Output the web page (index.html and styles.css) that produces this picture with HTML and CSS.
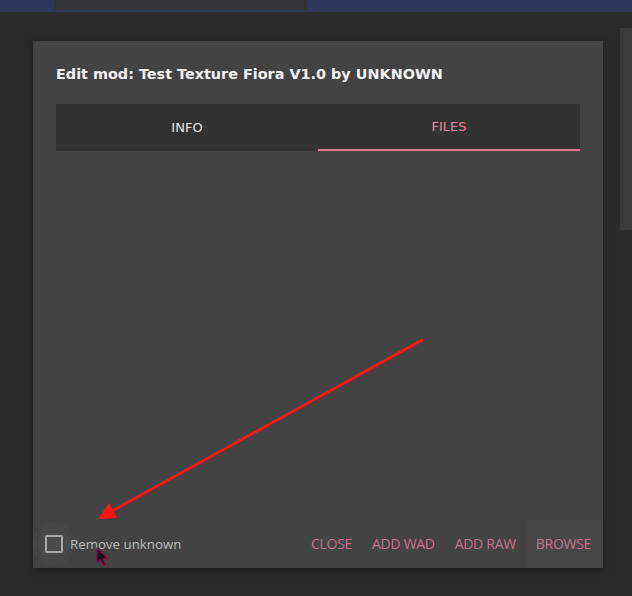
FILE: index.html
```html
<!DOCTYPE html>
<html>
<head>
<meta charset="utf-8">
<link rel="stylesheet" href="styles.css">
</head>
<body>
<div class="topbar"><div class="topblock"></div></div>
<div class="stage">
  <div class="modal">
    <h1 class="title">Edit mod: Test Texture Fiora V1.0 by UNKNOWN</h1>
    <div class="tabs">
      <div class="tab">INFO</div>
      <div class="tab active">FILES</div>
    </div>
    <div class="content"></div>
    <div class="footer">
      <label class="check">
        <span class="ripple"><span class="box"></span></span>
        <span class="check-label">Remove unknown</span>
      </label>
      <div class="actions">
        <span class="btn">CLOSE</span>
        <span class="btn">ADD WAD</span>
        <span class="btn">ADD RAW</span>
        <span class="btn hover">BROWSE</span>
      </div>
    </div>
  </div>
  <div class="sidepanel"></div>
</div>
<svg class="annot" width="632" height="596" viewBox="0 0 632 596">
  <line x1="422" y1="340" x2="112" y2="511" stroke="#ff1414" stroke-width="2.6" stroke-linecap="round"/>
  <polygon points="98,519 109,503 117,518" fill="#ff1414"/>
</svg>
<svg class="cursor" width="16" height="22" viewBox="0 0 16 22">
  <path d="M1 1 L1 16 L4.5 12.5 L7.5 19 L10 18 L7 11.5 L12 11.5 Z" fill="#1a0a12" stroke="#7a1040" stroke-width="1.4" stroke-linejoin="round"/>
</svg>
</body>
</html>
```

FILE: styles.css
```css
html, body {
  margin: 0;
  padding: 0;
}
body {
  width: 632px;
  height: 596px;
  overflow: hidden;
  background: #2a2a2a;
  position: relative;
  font-family: "Open Sans", "DejaVu Sans", sans-serif;
}
.topbar {
  height: 12px;
  background: #30365a;
  display: flex;
}
.topblock {
  margin-left: 54px;
  width: 253px;
  height: 10px;
  background: #333336;
}
.stage {
  display: flex;
  align-items: flex-start;
}
.modal {
  margin-top: 29px;
  margin-left: 33px;
  width: 570px;
  height: 527px;
  background: #434343;
  box-shadow: 0 2px 6px rgba(0,0,0,0.35);
  display: flex;
  flex-direction: column;
}
.title {
  margin: 23px 22px 0 23px;
  font-family: "DejaVu Sans", sans-serif;
  font-weight: bold;
  font-size: 14.4px;
  line-height: 20px;
  color: #f2f2f2;
}
.tabs {
  margin: 20px 23px 0 23px;
  height: 47px;
  background: #323232;
  display: flex;
}
.tab {
  flex: 1;
  display: flex;
  align-items: center;
  justify-content: center;
  font-family: "DejaVu Sans", sans-serif;
  font-size: 13px;
  color: #e6e6e6;
}
.tab.active {
  color: #e58aa6;
  border-bottom: 2px solid #e57d9a;
}
.content {
  flex: 1;
}
.footer {
  display: flex;
  align-items: center;
  justify-content: space-between;
  height: 48px;
  padding: 0 12px 0 5px;
}
.check {
  display: flex;
  align-items: center;
}
.ripple {
  width: 32px;
  height: 32px;
  border-radius: 50%;
  background: rgba(255,255,255,0.035);
  box-shadow: 0 0 0 6px rgba(255,255,255,0.018);
  display: flex;
  align-items: center;
  justify-content: center;
}
.box {
  width: 14px;
  height: 14px;
  border: 2px solid #a9a9a9;
  border-radius: 2px;
}
.check-label {
  font-size: 13.3px;
  color: #bcbcbc;
  margin-top: -1px;
}
.actions {
  display: flex;
  align-items: center;
  align-self: stretch;
}
.btn {
  font-size: 14px;
  color: #c7738f;
  padding: 0 10px 1px;
  display: flex;
  align-items: center;
  align-self: stretch;
  letter-spacing: -0.3px;
}
.btn.hover {
  background: #464646;
  margin-right: -10px;
}
.sidepanel {
  margin-top: 16px;
  margin-left: 17px;
  flex: 1;
  height: 202px;
  background: #3b3b3b;
}
.annot {
  position: absolute;
  left: 0;
  top: 0;
  pointer-events: none;
}
.cursor {
  position: absolute;
  left: 96px;
  top: 547px;
}
```
